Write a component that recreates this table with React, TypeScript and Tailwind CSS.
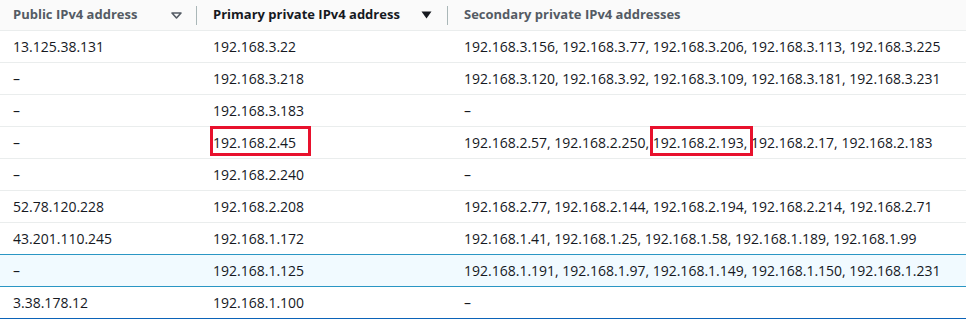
import React from "react";

type Row = { pub: string; pri: React.ReactNode; sec: React.ReactNode; border?: string; bg?: string };

const Box = ({ children, cls }: { children: React.ReactNode; cls: string }) => (
  <span className="relative">
    {children}
    <span className={`absolute border-[3px] border-[#e8112d] pointer-events-none ${cls}`} />
  </span>
);

const rows: Row[] = [
  { pub: "13.125.38.131", pri: "192.168.3.22", sec: "192.168.3.156, 192.168.3.77, 192.168.3.206, 192.168.3.113, 192.168.3.225" },
  { pub: "–", pri: "192.168.3.218", sec: "192.168.3.120, 192.168.3.92, 192.168.3.109, 192.168.3.181, 192.168.3.231" },
  { pub: "–", pri: "192.168.3.183", sec: "–" },
  {
    pub: "–",
    pri: <Box cls="top-[-7px] bottom-[-4px] left-[-3px] right-[-15px]">192.168.2.45</Box>,
    sec: (
      <>
        192.168.2.57, 192.168.2.250, <Box cls="top-[-7px] bottom-[-4px] left-[-3px] right-[-6px]">192.168.2.193,</Box>
        {" "}192.168.2.17, 192.168.2.183
      </>
    ),
  },
  { pub: "–", pri: "192.168.2.240", sec: "–" },
  { pub: "52.78.120.228", pri: "192.168.2.208", sec: "192.168.2.77, 192.168.2.144, 192.168.2.194, 192.168.2.214, 192.168.2.71" },
  { pub: "43.201.110.245", pri: "192.168.1.172", sec: "192.168.1.41, 192.168.1.25, 192.168.1.58, 192.168.1.189, 192.168.1.99", border: "border-[#2a96c4]" },
  { pub: "–", pri: "192.168.1.125", sec: "192.168.1.191, 192.168.1.97, 192.168.1.149, 192.168.1.150, 192.168.1.231", border: "border-[#2a96c4]", bg: "bg-[#f1faff]" },
  { pub: "3.38.178.12", pri: "192.168.1.100", sec: "–", border: "border-[#0b63b8]" },
];

export default function App() {
  return (
    <div className="w-[966px] h-[319px] overflow-hidden bg-white text-[14px] text-[#16191f]" style={{ fontFamily: '"Open Sans", sans-serif' }}>
      <div className="grid grid-cols-[197px_251px_1fr] h-[31px] border-b border-[#eaeded] bg-[#fafafa] font-bold text-[13px] text-[#545b64]">
        <div className="flex items-center pl-[13px]">
          <span className="flex-1">Public IPv4 address</span>
          <svg width="11" height="7" viewBox="0 0 11 7" className="mr-[14px]">
            <path d="M1 1 L10 1 L5.5 6 Z" fill="none" stroke="#545b64" strokeWidth="1.6" strokeLinejoin="round" />
          </svg>
          <div className="w-px h-[19px] bg-[#aab7b8]" />
        </div>
        <div className="flex items-center pl-[16px]">
          <span className="flex-1 text-[#16191f]">Primary private IPv4 address</span>
          <svg width="11" height="8" viewBox="0 0 11 8" className="mr-[15px]">
            <path d="M0.5 0.5 L10.5 0.5 L5.5 7.5 Z" fill="#16191f" />
          </svg>
          <div className="w-px h-[19px] bg-[#aab7b8]" />
        </div>
        <div className="flex items-center pl-[16px]">
          <span>Secondary private IPv4 addresses</span>
        </div>
      </div>
      {rows.map((r, i) => (
        <div key={i} className={`grid grid-cols-[197px_251px_1fr] h-[32px] border-b ${r.border ?? "border-[#eaeded]"} ${r.bg ?? ""}`}>
          <div className="flex items-center pl-[13px] whitespace-nowrap">{r.pub}</div>
          <div className="flex items-center pl-[16px] whitespace-nowrap">
            <div>{r.pri}</div>
          </div>
          <div className="flex items-center pl-[16px] whitespace-nowrap">
            <div>{r.sec}</div>
          </div>
        </div>
      ))}
    </div>
  );
}
